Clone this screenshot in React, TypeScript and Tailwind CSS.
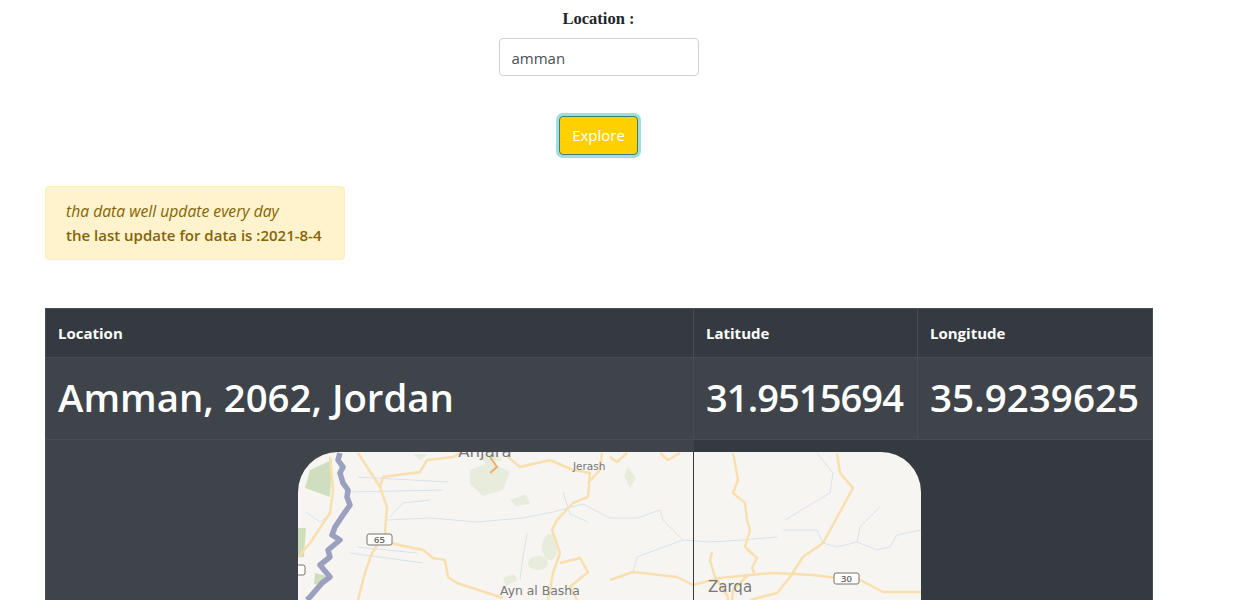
const font = "font-['Open_Sans','Noto_Sans',sans-serif]";

const roads = [
  "M60 1 L82 35 L89 55 L87 81 L74 101 L67 121 L60 148",
  "M82 35 L85 25 L122 20 L129 8 L155 5 L162 1",
  "M32 5 L35 38 L32 61 L12 91 L0 105",
  "M92 91 L125 98 L135 106 L147 108 L150 125 L159 131 L205 146",
  "M210 5 L222 15 L252 8 L275 18 L292 21 L290 45 L275 51 L259 68 L254 78 L262 101 L255 121 L250 148",
  "M262 111 L282 106 L290 120 L272 135 L279 148",
  "M304 1 L302 18 L290 31",
  "M312 5 L319 10 L329 1",
  "M362 1 L370 8 L382 1",
  "M435 1 L437 11 L440 28 L435 41 L447 51 L449 68 L452 78 L447 95 L459 106 L454 116 L457 123",
  "M539 1 L542 21 L555 36 L525 91 L505 105 L492 125 L479 141 L452 148",
  "M312 128 L335 120 L379 125 L395 133 L422 126 L452 123 L475 121 L515 123 L539 126 L562 128 L585 140 L623 140",
  "M414 100 L412 108 L417 125 L430 145 L430 148",
  "M450 123 L435 138 L434 148",
];

const rivers = [
  "M89 68 L132 66 L179 70 L225 66 L255 60 L285 52 L312 66 L339 66 L362 58 L365 68 L385 88 L412 90 L445 88 L479 85",
  "M485 78 L519 78 L525 91 L539 95 L559 90 L579 98 L592 95 L599 83 L623 78",
  "M487 68 L532 41 L535 21 L519 1",
  "M559 90 L562 75 L582 55",
  "M385 88 L339 105 L335 120",
  "M52 40 L145 38",
  "M60 25 L150 30",
  "M59 95 L119 101",
  "M52 101 L125 111",
  "M92 65 L105 51 L132 48",
  "M229 81 L225 105 L222 128",
  "M265 40 L272 62 L290 70",
  "M8 60 L22 70 L32 62",
];

function Badge({ x, y, label }: { x: number; y: number; label: string }) {
  return (
    <g>
      <rect x={x} y={y} width="25" height="11" rx="2" fill="#fff" stroke="#77736e" strokeWidth="1" />
      <text x={x + 12.5} y={y + 9} textAnchor="middle" fontSize="9.5" fontWeight="600" fill="#666" fontFamily="Open Sans">
        {label}
      </text>
    </g>
  );
}

function MapPicture() {
  return (
    <div className="relative z-10 w-[623px] h-[148px] rounded-t-[40px] overflow-hidden bg-[#f7f5f1]">
      <svg width="623" height="148" viewBox="0 0 623 148" className="block">
        <defs>
          <filter id="soft">
            <feGaussianBlur stdDeviation="0.4" />
          </filter>
        </defs>
        <g filter="url(#soft)">
          <g fill="#cfdfbe">
            <path d="M34 8 L32 45 L7 36 L12 18 Z" />
            <path d="M0 76 L8 76 L6 105 L0 105 Z" />
            <path d="M17 121 L28 124 L24 134 L16 132 Z" />
          </g>
          <g fill="#e8ecdc">
            <path d="M172 18 L192 10 L212 20 L205 38 L185 44 L172 32 Z" />
            <path d="M180 3 L198 1 L205 8 L188 12 Z" />
            <path d="M212 48 L228 42 L232 52 L218 54 Z" />
            <ellipse cx="252" cy="95" rx="8" ry="13" />
            <ellipse cx="240" cy="111" rx="10" ry="7" />
            <path d="M205 126 L216 122 L220 128 L208 134 Z" />
            <path d="M330 15 L338 26 L332 36 L326 24 Z" />
            <path d="M115 2 L130 2 L122 8 Z" />
          </g>
          <g fill="none" stroke="#d6e2ee" strokeWidth="1">
            {rivers.map((d) => (
              <path key={d} d={d} />
            ))}
          </g>
          <g fill="none" stroke="#f9dfae" strokeWidth="2.5" strokeLinejoin="round">
            {roads.map((d) => (
              <path key={d} d={d} />
            ))}
          </g>
          <path d="M192 5 L199 15 L192 21" fill="none" stroke="#efae6c" strokeWidth="2" />
          <path
            d="M42 1 L40 8 L45 15 L42 21 L45 31 L50 38 L49 45 L52 53 L45 63 L37 75 L34 83 L42 88 L30 98 L32 105 L22 113 L32 125 L24 131 L12 145 L9 148"
            fill="none"
            stroke="#9aa0bd"
            strokeWidth="5.5"
            strokeLinejoin="round"
          />
        </g>
        <g fill="#77777a" fontFamily="DejaVu Sans">
          <text x="187" y="5" fontSize="16.5" textAnchor="middle">Anjara</text>
          <text x="275" y="18" fontSize="10.5">Jerash</text>
          <text x="202" y="143" fontSize="12.4">Ayn al Basha</text>
          <text x="410" y="140" fontSize="15">Zarqa</text>
        </g>
        <Badge x={69} y={82} label="65" />
        <Badge x={536} y={121} label="30" />
        <rect x="-18" y="113" width="25" height="10" rx="2" fill="#fff" stroke="#77736e" />
        <rect x="395" y="0" width="1" height="148" fill="#343a40" />
      </svg>
    </div>
  );
}

export default function App() {
  return (
    <div className={`h-screen overflow-hidden bg-white ${font}`}>
      <form className="flex flex-col items-center pr-[38px]">
        <label htmlFor="location" className="mt-[9px] h-[29px] font-['Liberation_Serif',serif] font-bold text-[16.5px] leading-5 text-[#212529]">
          Location :
        </label>
        <input
          id="location"
          defaultValue="amman"
          className="w-[200px] h-[38px] px-3 pt-0.5 rounded border border-[#ced4da] text-[15px] text-[#495057] outline-none"
        />
        <button
          type="button"
          className="mt-10 w-[79px] h-[39px] rounded bg-[#ffd000] border border-[#3f7d70] text-[15px] text-white ring-[3px] ring-[#a0dde0]"
        >
          Explore
        </button>
      </form>

      <div className="ml-[45px] mt-[31px] w-[300px] h-[74px] px-5 py-3 rounded border border-[#ffeeba] bg-[#fff3cd] text-[#856404] leading-6">
        <p className="italic text-[15.7px]">tha data well update every day</p>
        <p className="font-semibold text-[15px] whitespace-nowrap">the last update for data is :2021-8-4</p>
      </div>

      <table className="ml-[45px] mt-12 w-[1107px] table-fixed border-collapse text-white">
        <colgroup>
          <col className="w-[648px]" />
          <col className="w-[224px]" />
          <col className="w-[235px]" />
        </colgroup>
        <thead className="bg-[#343a40]">
          <tr className="h-[49px] text-left text-[15px] font-bold">
            <th className="border border-[#454d55] px-3">Location</th>
            <th className="border border-[#454d55] px-3">Latitude</th>
            <th className="border border-[#454d55] px-3">Longitude</th>
          </tr>
        </thead>
        <tbody>
          <tr className="h-[82px] bg-[#3e444a] font-semibold">
            <td className="border border-[#454d55] px-3 pb-0.5 whitespace-nowrap text-[38.4px]">Amman, 2062, Jordan</td>
            <td className="border border-[#454d55] px-3 pb-0.5 whitespace-nowrap text-[38px] tracking-[-0.9px]">31.9515694</td>
            <td className="border border-[#454d55] px-3 pb-0.5 whitespace-nowrap text-[38.6px]">35.9239625</td>
          </tr>
          <tr>
            <td className="bg-[#3e444a] border-l border-[#454d55] pl-[252px] pt-3 align-top">
              <MapPicture />
            </td>
            <td colSpan={2} className="bg-[#343a40] border-r border-[#454d55]" />
          </tr>
        </tbody>
      </table>
    </div>
  );
}
